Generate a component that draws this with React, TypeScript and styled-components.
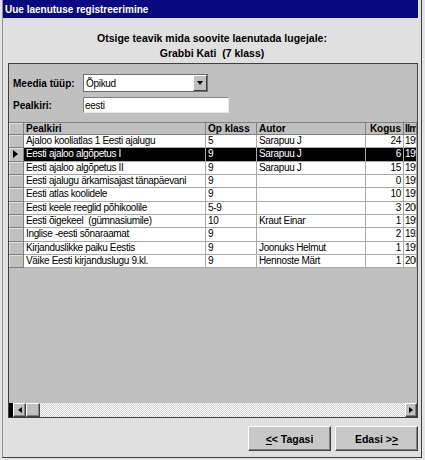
import React from 'react';
import styled, { createGlobalStyle } from 'styled-components';

const Global = createGlobalStyle`
  html, body { margin: 0; padding: 0; background: #e4e4e4; }
  body {
    font-family: "Liberation Sans", Arial, sans-serif;
    width: 425px; height: 460px; overflow: hidden;
  }
  * { box-sizing: border-box; }
`;

const Window = styled.div`
  margin-left: 2px;
  width: 420px;
  height: 458px;
  border-left: 1px solid #909090;
  border-right: 1px solid #404040;
  border-bottom: 1px solid #404040;
  background: #e0e0e0;
  display: flex;
  flex-direction: column;
`;

const TitleBar = styled.div`
  height: 18px;
  margin-right: 3px;
  background: #0a0a80;
  color: #fff;
  font-weight: bold;
  font-size: 10px;
  display: flex;
  align-items: center;
  padding-left: 2px;
`;

const Heading = styled.div`
  height: 45px;
  padding-top: 13px;
  text-align: center;
  font-weight: bold;
  font-size: 10.5px;
  line-height: 15px;
  white-space: pre;
  color: #000;
`;

const Panel = styled.div`
  margin-left: 5px;
  width: 410px;
  height: 355px;
  border: 1px solid #404040;
  background: #c0c0c0;
  display: flex;
  flex-direction: column;
`;

const Form = styled.div`
  padding: 10px 0 0 4px;
  display: flex;
  flex-direction: column;
  gap: 5px;
`;

const FieldRow = styled.div<{ $h: number }>`
  display: flex;
  align-items: center;
  height: ${p => p.$h}px;
`;

const Label = styled.div`
  width: 70px;
  font-weight: bold;
  font-size: 10px;
  color: #000;
`;

const SelectBox = styled.div`
  width: 125px;
  height: 18px;
  background: #fff;
  border: 1px solid #707070;
  display: flex;
  align-items: center;
  font-size: 10px;
  letter-spacing: -0.3px;
  padding-left: 2px;
  justify-content: space-between;
`;

const DropButton = styled.div`
  width: 14px;
  height: 16px;
  background: #c0c0c0;
  border: 1px solid;
  border-color: #fff #404040 #404040 #fff;
  display: flex;
  align-items: center;
  justify-content: center;
`;

const DownTri = styled.span`
  width: 0; height: 0;
  border-left: 3.5px solid transparent;
  border-right: 3.5px solid transparent;
  border-top: 4px solid #000;
`;

const TextBox = styled.div`
  width: 146px;
  height: 16px;
  background: #fff;
  border-top: 1px solid #808080;
  border-left: 1px solid #808080;
  border-bottom: 1px solid #e8e8e8;
  border-right: 1px solid #e8e8e8;
  font-size: 10px;
  letter-spacing: -0.3px;
  padding-left: 1px;
  display: flex;
  align-items: center;
`;

const Grid = styled.div`
  margin-top: 9px;
  flex: 1;
  display: flex;
  flex-direction: column;
  overflow: hidden;
`;

const Row = styled.div<{ $head?: boolean; $sel?: boolean }>`
  display: flex;
  height: ${p => (p.$head ? '13px' : '13.333px')};
  flex-shrink: 0;
  background: ${p => (p.$head ? '#c0c0c0' : p.$sel ? '#000' : '#fff')};
  color: ${p => (p.$sel ? '#fff' : '#000')};
  font-size: 10px;
  font-weight: ${p => (p.$head ? 'bold' : 'normal')};
  letter-spacing: ${p => (p.$head ? '0' : '-0.35px')};
  ${p => (p.$head ? 'border-top: 1px solid #808080;' : '')}
`;

const Cell = styled.div<{ $w?: number; $right?: boolean; $head?: boolean }>`
  ${p => (p.$w ? `width: ${p.$w}px; flex-shrink: 0;` : 'flex: 1; min-width: 0; padding-left: 1px !important; letter-spacing: -0.6px;')}
  border-right: 1px solid ${p => (p.$head ? '#808080' : '#a8a8a8')};
  border-bottom: 1px solid ${p => (p.$head ? '#808080' : '#a8a8a8')};
  padding: 0 2px;
  line-height: 12px;
  white-space: pre;
  overflow: hidden;
  text-align: ${p => (p.$right ? 'right' : 'left')};
`;

const Selector = styled.div`
  width: 15px;
  flex-shrink: 0;
  background: #c0c0c0;
  border-right: 1px solid #808080;
  border-bottom: 1px solid #808080;
  box-shadow: inset 1px 1px #e0e0e0;
  display: flex;
  align-items: center;
  padding-left: 4px;
`;

const RightTri = styled.span`
  width: 0; height: 0;
  border-top: 4px solid transparent;
  border-bottom: 4px solid transparent;
  border-left: 5px solid #000;
`;

const LeftTri = styled.span`
  width: 0; height: 0;
  border-top: 3.5px solid transparent;
  border-bottom: 3.5px solid transparent;
  border-right: 4px solid #000;
`;

const SmallRightTri = styled.span`
  width: 0; height: 0;
  border-top: 3.5px solid transparent;
  border-bottom: 3.5px solid transparent;
  border-left: 4px solid #000;
`;

const Spacer = styled.div`
  flex: 1;
`;

const HScroll = styled.div`
  height: 14px;
  display: flex;
  flex-shrink: 0;
`;

const BlackBlock = styled.div`
  width: 4px;
  background: #000;
`;

const ScrollBtn = styled.div<{ $w: number }>`
  width: ${p => p.$w}px;
  background: #c0c0c0;
  border: 1px solid;
  border-color: #fff #404040 #404040 #fff;
  box-shadow: inset -1px -1px #808080;
  display: flex;
  align-items: center;
  justify-content: center;
`;

const Track = styled.div`
  flex: 1;
  background: repeating-conic-gradient(#ffffff 0 25%, #d0d0d0 0 50%) 0 0 / 2px 2px;
`;

const Footer = styled.div`
  display: flex;
  justify-content: flex-end;
  gap: 4px;
  padding-top: 8px;
  margin-right: 3px;
`;

const Button = styled.button`
  width: 83px;
  height: 25px;
  background: #c8c8c8;
  border: 1px solid;
  border-color: #ffffff #404040 #404040 #ffffff;
  box-shadow: inset -1px -1px #808080;
  font-family: "Liberation Sans", Arial, sans-serif;
  font-weight: bold;
  font-size: 10.5px;
  color: #000;
  padding: 0;
`;

const cols = [
  { key: 'title', w: 182, label: 'Pealkiri' },
  { key: 'cls', w: 51, label: 'Öp klass' },
  { key: 'author', w: 109, label: 'Autor' },
  { key: 'qty', w: 38, label: 'Kogus', right: true },
  { key: 'year', w: 0, label: 'Ilmumisaasta' },
] as const;

type Item = { title: string; cls: string; author: string; qty: string; year: string };

const items: Item[] = [
  { title: 'Ajaloo kooliatlas 1 Eesti ajalugu', cls: '5', author: 'Sarapuu J', qty: '24', year: '1997' },
  { title: 'Eesti ajaloo algõpetus I', cls: '9', author: 'Sarapuu J', qty: '6', year: '1996' },
  { title: 'Eesti ajaloo algõpetus II', cls: '9', author: 'Sarapuu J', qty: '15', year: '1997' },
  { title: 'Eesti ajalugu ärkamisajast tänapäevani', cls: '9', author: '', qty: '0', year: '1995' },
  { title: 'Eesti atlas koolidele', cls: '9', author: '', qty: '10', year: '1998' },
  { title: 'Eesti keele reeglid põhikoolile', cls: '5-9', author: '', qty: '3', year: '2000' },
  { title: 'Eesti õigekeel  (gümnasiumile)', cls: '10', author: 'Kraut Einar', qty: '1', year: '1999' },
  { title: 'Inglise -eesti sõnaraamat', cls: '9', author: '', qty: '2', year: '1925' },
  { title: 'Kirjanduslikke paiku Eestis', cls: '9', author: 'Joonuks Helmut', qty: '1', year: '1998' },
  { title: 'Väike Eesti kirjanduslugu 9.kl.', cls: '9', author: 'Hennoste Märt', qty: '1', year: '2001' },
];

const SELECTED = 1;

export default function App() {
  return (
    <>
      <Global />
      <Window>
        <TitleBar>Uue laenutuse registreerimine</TitleBar>
        <Heading>
          {'Otsige teavik mida soovite laenutada lugejale:\nGrabbi Kati  (7 klass)'}
        </Heading>
        <Panel>
          <Form>
            <FieldRow $h={18}>
              <Label>Meedia tüüp:</Label>
              <SelectBox>
                <span>Õpikud</span>
                <DropButton>
                  <DownTri />
                </DropButton>
              </SelectBox>
            </FieldRow>
            <FieldRow $h={16}>
              <Label>Pealkiri:</Label>
              <TextBox>eesti</TextBox>
            </FieldRow>
          </Form>
          <Grid>
            <Row $head>
              <Selector />
              {cols.map(c => (
                <Cell key={c.key} $head $w={c.w || undefined} $right={'right' in c && c.right}>
                  {c.label}
                </Cell>
              ))}
            </Row>
            {items.map((it, i) => (
              <Row key={i} $sel={i === SELECTED}>
                <Selector>{i === SELECTED && <RightTri />}</Selector>
                {cols.map(c => (
                  <Cell key={c.key} $w={c.w || undefined} $right={'right' in c && c.right}>
                    {it[c.key]}
                  </Cell>
                ))}
              </Row>
            ))}
            <Spacer />
            <HScroll>
              <BlackBlock />
              <ScrollBtn $w={13}>
                <LeftTri />
              </ScrollBtn>
              <ScrollBtn $w={14} />
              <Track />
              <ScrollBtn $w={12}>
                <SmallRightTri />
              </ScrollBtn>
            </HScroll>
          </Grid>
        </Panel>
        <Footer>
          <Button>
            <u>&lt;</u>&lt; Tagasi
          </Button>
          <Button>
            Edasi &gt;<u>&gt;</u>
          </Button>
        </Footer>
      </Window>
    </>
  );
}
